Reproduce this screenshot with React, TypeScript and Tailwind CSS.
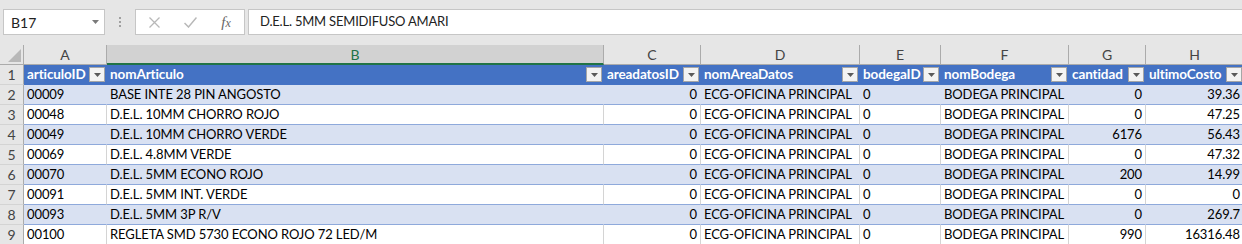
const cols = [
  { key: 'A', w: 'w-[83px]', label: 'articuloID', right: false },
  { key: 'B', w: 'w-[497px]', label: 'nomArticulo', right: false },
  { key: 'C', w: 'w-[97px]', label: 'areadatosID', right: true },
  { key: 'D', w: 'w-[159px]', label: 'nomAreaDatos', right: false },
  { key: 'E', w: 'w-[81px]', label: 'bodegaID', right: false },
  { key: 'F', w: 'w-[128px]', label: 'nomBodega', right: false },
  { key: 'G', w: 'w-[77px]', label: 'cantidad', right: true },
  { key: 'H', w: 'w-[98px]', label: 'ultimoCosto', right: true },
]

const rows = [
  ['00009', 'BASE INTE 28 PIN ANGOSTO', '0', 'ECG-OFICINA PRINCIPAL', '0', 'BODEGA PRINCIPAL', '0', '39.36'],
  ['00048', 'D.E.L. 10MM CHORRO ROJO', '0', 'ECG-OFICINA PRINCIPAL', '0', 'BODEGA PRINCIPAL', '0', '47.25'],
  ['00049', 'D.E.L. 10MM CHORRO VERDE', '0', 'ECG-OFICINA PRINCIPAL', '0', 'BODEGA PRINCIPAL', '6176', '56.43'],
  ['00069', 'D.E.L. 4.8MM VERDE', '0', 'ECG-OFICINA PRINCIPAL', '0', 'BODEGA PRINCIPAL', '0', '47.32'],
  ['00070', 'D.E.L. 5MM ECONO ROJO', '0', 'ECG-OFICINA PRINCIPAL', '0', 'BODEGA PRINCIPAL', '200', '14.99'],
  ['00091', 'D.E.L. 5MM INT. VERDE', '0', 'ECG-OFICINA PRINCIPAL', '0', 'BODEGA PRINCIPAL', '0', '0'],
  ['00093', 'D.E.L. 5MM 3P R/V', '0', 'ECG-OFICINA PRINCIPAL', '0', 'BODEGA PRINCIPAL', '0', '269.7'],
  ['00100', 'REGLETA SMD 5730 ECONO ROJO 72 LED/M', '0', 'ECG-OFICINA PRINCIPAL', '0', 'BODEGA PRINCIPAL', '990', '16316.48'],
]

function FilterButton() {
  return (
    <div className="absolute bottom-[2px] right-[1px] flex h-[15px] w-[16px] items-center justify-center border border-[#a6a6a6] bg-[#f3f3f3]">
      <svg width="7" height="4" viewBox="0 0 7 4">
        <path d="M0 0h7L3.5 4z" fill="#5a5a5a" />
      </svg>
    </div>
  )
}

function FormulaBar() {
  return (
    <div className="flex h-[45px] items-start bg-[#e6e6e6] pl-[3px] pt-[9px]">
      <div className="relative flex h-[26px] w-[102px] items-center border border-[#c6c6c6] bg-white pl-[7px] text-[14px] text-[#222]">
        B17
        <svg className="absolute right-[5px] top-[10px]" width="7" height="4" viewBox="0 0 7 4">
          <path d="M0 0h7L3.5 4z" fill="#7a7a7a" />
        </svg>
      </div>
      <div className="flex h-[26px] w-[30px] flex-col items-center justify-center gap-[2px]">
        <span className="h-[2px] w-[2px] bg-[#a0a0a0]" />
        <span className="h-[2px] w-[2px] bg-[#a0a0a0]" />
        <span className="h-[2px] w-[2px] bg-[#a0a0a0]" />
      </div>
      <div className="flex h-[26px] w-[110px] items-center border border-[#c6c6c6] bg-white">
        <div className="flex w-[36px] justify-center">
          <svg width="11" height="11" viewBox="0 0 11 11">
            <path d="M0.5 0.5l10 10M10.5 0.5l-10 10" stroke="#b8b8b8" strokeWidth="1.3" />
          </svg>
        </div>
        <div className="flex w-[36px] justify-center">
          <svg width="13" height="11" viewBox="0 0 13 11">
            <path d="M0.5 6l4 4L12.5 0.5" stroke="#b8b8b8" strokeWidth="1.5" fill="none" />
          </svg>
        </div>
        <div className="w-[36px] text-center font-['Liberation_Serif',serif] text-[15px] leading-none italic text-[#666]">
          f<span className="text-[12px]">x</span>
        </div>
      </div>
      <div className="ml-[3px] flex h-[26px] flex-1 items-center border border-r-0 border-[#c6c6c6] bg-white pl-[11px] text-[13px] tracking-[-0.2px] text-[#222]">
        D.E.L. 5MM SEMIDIFUSO AMARI
      </div>
    </div>
  )
}

function ColumnHeaders() {
  return (
    <div className="flex h-[20px]">
      <div className="relative w-[24px] shrink-0 border-b border-r border-[#ababab] bg-[#e6e6e6]">
        <svg className="absolute bottom-[2px] right-[2px]" width="13" height="13" viewBox="0 0 13 13">
          <path d="M13 0V13H0z" fill="#b8b8b8" />
        </svg>
      </div>
      {cols.map((c) =>
        c.key === 'B' ? (
          <div
            key={c.key}
            className={`${c.w} flex shrink-0 items-center justify-center border-b-2 border-r border-b-[#217346] border-r-[#ababab] bg-[#d2d2d2] pt-[1px] text-[14px] text-[#217346]`}
          >
            {c.key}
          </div>
        ) : (
          <div
            key={c.key}
            className={`${c.w} flex shrink-0 items-center justify-center border-b border-r border-[#ababab] bg-[#e6e6e6] text-[14px] text-[#444]`}
          >
            {c.key}
          </div>
        ),
      )}
    </div>
  )
}

function RowNumber({ n }: { n: number }) {
  return (
    <div className="flex w-[24px] shrink-0 items-center justify-center border-b border-r border-b-[#d4d4d4] border-r-[#ababab] bg-[#e6e6e6] text-[14px] text-[#444]">
      {n}
    </div>
  )
}

export default function App() {
  return (
    <div className="h-[244px] w-[1242px] overflow-hidden bg-white font-['Lato',sans-serif]">
      <FormulaBar />
      <ColumnHeaders />
      <div className="flex h-[20px]">
        <RowNumber n={1} />
        {cols.map((c) => (
          <div
            key={c.key}
            className={`${c.w} relative flex shrink-0 items-center overflow-hidden whitespace-nowrap border-b border-r border-[#4472c4] bg-[#4472c4] pl-[3px] text-[13.5px] font-bold tracking-[-0.1px] text-white`}
          >
            {c.label}
            <FilterButton />
          </div>
        ))}
      </div>
      {rows.map((r, i) => {
        const band = i % 2 === 0
        return (
          <div key={i} className="flex h-[20px]">
            <RowNumber n={i + 2} />
            {r.map((v, j) => (
              <div
                key={j}
                className={`${cols[j].w} flex shrink-0 items-center overflow-hidden whitespace-nowrap border-b border-r border-b-[#8ea9db] px-[3px] text-[13px] tracking-[-0.1px] text-black ${
                  band ? 'border-r-[#d9e1f2] bg-[#d9e1f2]' : 'border-r-[#d4d4d4] bg-white'
                } ${cols[j].right ? 'justify-end' : ''}`}
              >
                {v}
              </div>
            ))}
          </div>
        )
      })}
    </div>
  )
}
